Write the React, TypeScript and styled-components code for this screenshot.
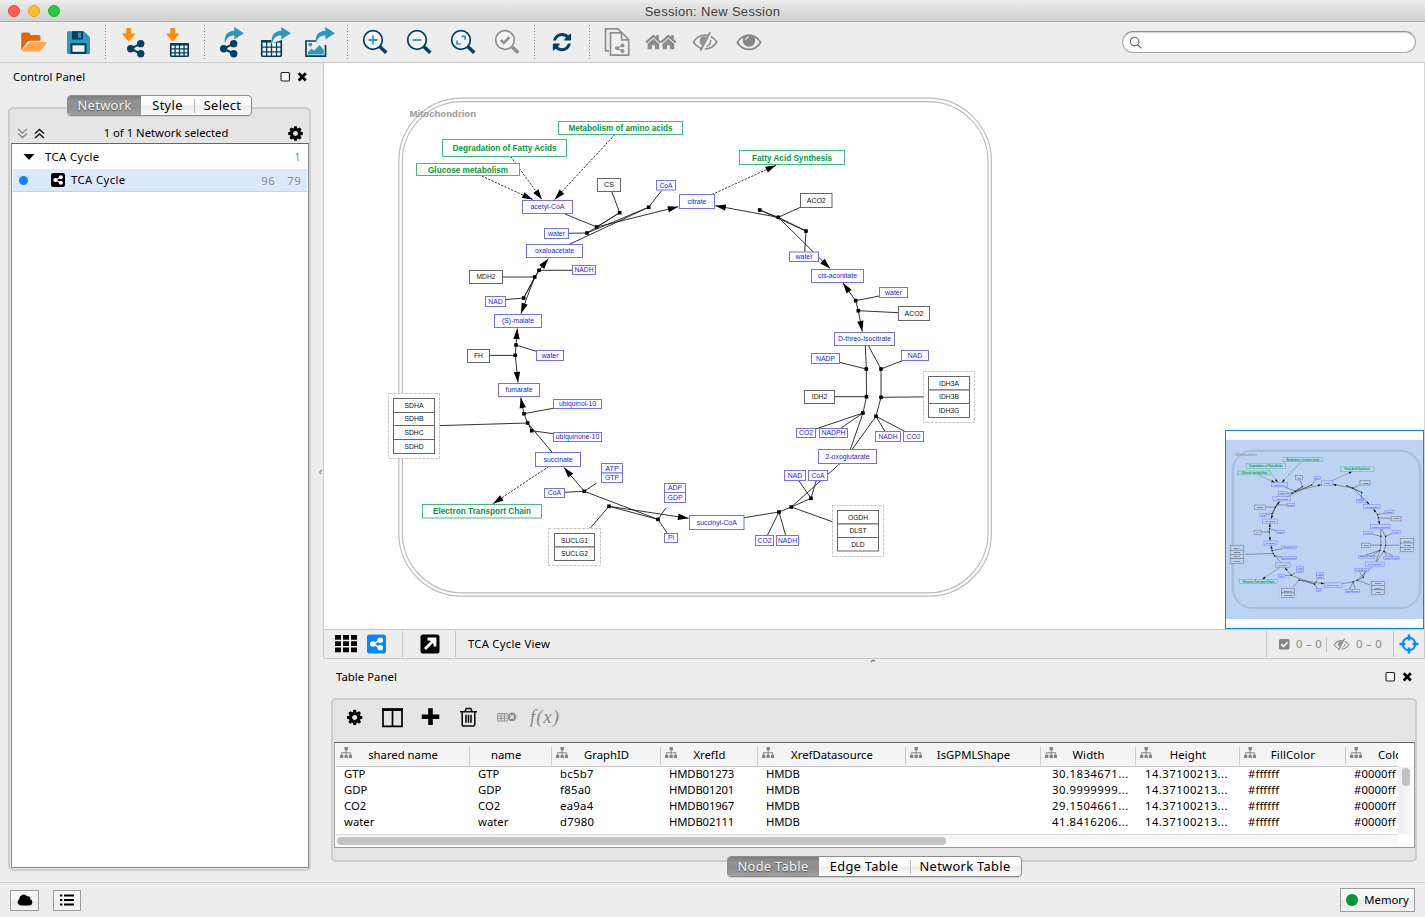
import React from 'react';
import styled, { createGlobalStyle } from 'styled-components';

const NAVY = '#02405f';
const TEAL = '#2f97b8';
const ORANGE = '#ff8a12';
const GREY = '#909090';
const BLUE = '#0a84ff';

const GlobalStyle = createGlobalStyle`
  html, body { margin: 0; padding: 0; }
  body {
    background: #ededed;
    font-family: 'Lucida Grande', 'Noto Sans', sans-serif;
    font-size: 11.3px;
    color: #000;
    overflow: hidden;
  }
  * { box-sizing: border-box; }
  svg { display: block; }
`;

const Window = styled.div`
  width: 1425px;
  height: 917px;
  display: flex;
  flex-direction: column;
  background: #ededed;
`;

const TitleBar = styled.header`
  height: 22px;
  flex: none;
  display: grid;
  grid-template-columns: 1fr auto 1fr;
  align-items: center;
  background: linear-gradient(#efefef, #e6e6e6 20%, #d0d0d0);
  border-bottom: 1px solid #adadad;
  border-radius: 4px 4px 0 0;
`;

const Lights = styled.div`
  display: flex;
  gap: 8px;
  padding-left: 8px;
`;

const Light = styled.i<{ $c: string; $b: string }>`
  width: 12px;
  height: 12px;
  border-radius: 50%;
  background: ${p => p.$c};
  border: 1px solid ${p => p.$b};
`;

const Title = styled.span`
  font: 13px/20px 'Liberation Sans', Arial, sans-serif;
  letter-spacing: 0.32px;
  color: #404040;
  padding-top: 2px;
  white-space: nowrap;
`;

const Toolbar = styled.div`
  height: 41px;
  flex: none;
  display: flex;
  align-items: center;
  padding: 0 9px 0 12px;
  border-bottom: 1px solid #cbcbcb;
`;

const ToolIcon = styled.svg`
  width: 44px;
  height: 40px;
  flex: none;
`;

const ToolSep = styled.div`
  width: 11px;
  height: 34px;
  flex: none;
  background: repeating-linear-gradient(#8d8d8d 0 1px, transparent 1px 3px) 5px 0 / 1px 100% no-repeat;
`;

const Search = styled.div`
  width: 294px;
  height: 22px;
  margin-left: auto;
  border: 1px solid #a9a9a9;
  border-top-color: #8f8f8f;
  border-radius: 11px;
  background: #fff;
  box-shadow: inset 0 1px 1px #d5d5d5;
  padding: 4px 0 0 6px;
`;

const Body = styled.div`
  flex: 1;
  display: flex;
  min-height: 0;
`;

const Side = styled.aside`
  width: 324px;
  flex: none;
  display: flex;
  flex-direction: column;
  padding: 0 13px 12px 8px;
  position: relative;
`;

const SideGrip = styled.div`
  position: absolute;
  right: 1px;
  top: 406px;
`;

const PanelHead = styled.div<{ $h: number; $pl: number; $pr: number; $pb?: number }>`
  height: ${p => p.$h}px;
  flex: none;
  display: flex;
  align-items: center;
  padding: 0 ${p => p.$pr}px ${p => p.$pb ?? 0}px ${p => p.$pl}px;
`;

const Label = styled.span<{ $ls?: number; $c?: string }>`
  letter-spacing: ${p => p.$ls ?? 0}px;
  color: ${p => p.$c ?? '#000'};
  white-space: nowrap;
  line-height: 16px;
`;

const Spacer = styled.div`
  flex: 1;
`;

const Tabs = styled.div<{ $mt: number; $mb: number }>`
  height: 21px;
  flex: none;
  align-self: center;
  display: flex;
  position: relative;
  z-index: 1;
  margin: ${p => p.$mt}px 0 ${p => p.$mb}px;
  border: 1px solid #8c8c8c;
  border-radius: 4px;
  background: linear-gradient(#fff, #fbfbfb 45%, #ececec 55%, #fdfdfd);
  overflow: hidden;
  box-shadow: 0 1px 0 #cfcfcf;
`;

const Tab = styled.div<{ $w: number; $on?: boolean; $sep?: boolean }>`
  width: ${p => p.$w}px;
  font-size: 12.8px;
  letter-spacing: 0.35px;
  line-height: 19px;
  text-align: center;
  white-space: nowrap;
  color: ${p => (p.$on ? '#f4f4f4' : '#000')};
  text-shadow: ${p => (p.$on ? '0 1px 1px #555' : 'none')};
  background: ${p =>
    p.$on
      ? 'linear-gradient(#7d7d7d, #939393 30%, #8e8e8e 60%, #a0a0a0)'
      : p.$sep
        ? 'linear-gradient(#bdbdbd, #bdbdbd) 0 3px / 1px 14px no-repeat'
        : 'none'};
`;

const Group = styled.section<{ $h: number }>`
  height: ${p => p.$h}px;
  flex: none;
  display: flex;
  flex-direction: column;
  border: 2px solid #cdcdcd;
  border-radius: 5px;
  background: #e5e5e5;
  padding: 0 0 1px 1px;
`;

const TreeBar = styled.div`
  height: 34px;
  flex: none;
  display: flex;
  align-items: center;
  justify-content: space-between;
  padding: 14px 5px 0 6px;
`;

const Tree = styled.div`
  flex: 1;
  background: #fff;
  border: 1px solid #8a8a8a;
  border-top-color: #666;
  padding: 1px;
`;

const TreeRow = styled.div<{ $on?: boolean }>`
  height: ${p => (p.$on ? 22 : 23)}px;
  display: flex;
  align-items: center;
  padding: 0 6px;
  margin-bottom: 1px;
  background: ${p => (p.$on ? '#dce9fd' : '#fff')};
  box-shadow: ${p => (p.$on ? '0 1px 0 #cfd3d9' : 'none')};
`;

const TreeLead = styled.div<{ $w: number }>`
  width: ${p => p.$w}px;
  padding-right: 6px;
  flex: none;
  display: flex;
  align-items: center;
  justify-content: space-between;
`;

const Dot = styled.i<{ $s: number; $c: string }>`
  width: ${p => p.$s}px;
  height: ${p => p.$s}px;
  border-radius: 50%;
  background: ${p => p.$c};
`;

const Count = styled.span`
  width: 26px;
  text-align: right;
  color: #8b8b8b;
  letter-spacing: 0.4px;
`;

const Main = styled.main`
  flex: 1;
  min-width: 0;
  display: flex;
  flex-direction: column;
`;

const Canvas = styled.div`
  height: 566px;
  flex: none;
  position: relative;
  background: #fff;
  border-left: 1px solid #cbcbcb;
  margin-left: -1px;
  border-right: 1px solid #d5d5d5;
`;

const BirdsEye = styled.div`
  position: absolute;
  right: 0;
  bottom: 0;
  width: 199px;
  height: 199px;
  border: 1px solid ${BLUE};
  background: #fff;
  display: flex;
  align-items: center;
`;

const Lens = styled.div`
  height: 179px;
  flex: 1;
  background: #bcd3f3;
`;

const ViewBar = styled.div`
  height: 30px;
  flex: none;
  display: flex;
  align-items: center;
  border: 1px solid #c9c9c9;
  margin-left: -1px;
  padding-left: 11px;
`;

const VRule = styled.div<{ $l: number; $r: number; $h?: number }>`
  width: 1px;
  height: ${p => p.$h ?? 26}px;
  margin: 0 ${p => p.$r}px 0 ${p => p.$l}px;
  background: #c6c6c6;
`;

const Handle = styled.div`
  height: 6px;
  flex: none;
  display: flex;
  justify-content: center;
  padding-right: 3px;
`;

const TablePane = styled.div`
  flex: 1;
  display: flex;
  flex-direction: column;
  padding: 0 8px 0 7px;
`;

const TableTools = styled.div`
  height: 42px;
  flex: none;
`;

const Grid = styled.div`
  height: 106px;
  flex: none;
  background: #fff;
  border: 1px solid #9a9a9a;
  border-top-color: #666;
  padding: 0 1px;
  display: flex;
  flex-direction: column;
`;

const COLS = '134px 82px 109px 97px 148px 135px 95px 104px 106px 60px';

const HeadRow = styled.div`
  width: 1062px;
  height: 24px;
  display: grid;
  grid-template-columns: ${COLS};
  overflow: hidden;
  background: #f4f4f4;
  border-bottom: 1px solid #c8c8c8;
`;

const HeadCell = styled.div<{ $last?: boolean; $plain?: boolean }>`
  display: grid;
  grid-template-columns: ${p => (p.$last ? '32px 1fr' : '21px 1fr 21px')};
  align-items: center;
  white-space: nowrap;
  text-align: ${p => (p.$last ? 'left' : 'center')};
  padding-right: ${p => (p.$plain ? 12 : 0)}px;
  background: ${p => (p.$last ? 'none' : 'linear-gradient(#cacaca, #cacaca) right 4px / 1px 18px no-repeat')};
`;

const IconBox = styled.div`
  padding: 0 0 3px 4px;
`;

const BodyArea = styled.div`
  height: 67px;
  display: flex;
`;

const Rows = styled.div`
  width: 1062px;
  overflow: hidden;
`;

const Row = styled.div`
  height: 16px;
  display: grid;
  grid-template-columns: ${COLS};
`;

const Cell = styled.div<{ $pl: number; $ls: number }>`
  padding-left: ${p => p.$pl}px;
  letter-spacing: ${p => p.$ls}px;
  line-height: 14px;
  white-space: nowrap;
`;

const VTrack = styled.div`
  width: 15px;
  padding: 1px 3px;
  background: linear-gradient(90deg, #eee, #fafafa);
`;

const VThumb = styled.div`
  height: 18px;
  width: 8px;
  margin-left: 1px;
  border-radius: 4px;
  background: #c2c2c2;
`;

const HTrack = styled.div`
  width: 1062px;
  flex: 1;
  border-top: 1px solid #dcdcdc;
  padding: 1px;
  background: linear-gradient(#f3f3f3, #fff);
`;

const HThumb = styled.div`
  width: 609px;
  height: 8px;
  margin-top: 1px;
  border-radius: 4px;
  background: #c2c2c2;
`;

const StatusBar = styled.footer`
  height: 35px;
  flex: none;
  display: flex;
  align-items: center;
  gap: 14px;
  padding: 0 10px;
  border-top: 1px solid #cdcdcd;
`;

const StatusButton = styled.div<{ $w: number; $h: number }>`
  width: ${p => p.$w}px;
  height: ${p => p.$h}px;
  display: flex;
  align-items: center;
  justify-content: center;
  gap: 6px;
  border: 1px solid #9b9b9b;
  background: linear-gradient(#fafafa, #f4f4f4 50%, #e9e9e9 52%, #f5f5f5);
`;

/* ---------- icons ---------- */

const Fa = ({ d, s, c }: { d: string; s: number; c: string }) => (
  <svg width={s} height={s} viewBox="0 0 1792 1792" fill={c}><path d={d} /></svg>
);

const EYE = 'M1664 960q-152-236-381-353 61 104 61 225 0 185-131.5 316.5t-316.5 131.5-316.5-131.5-131.5-316.5q0-121 61-225-229 117-381 353 133 205 333.5 326.5t434.5 121.5 434.5-121.5 333.5-326.5zM944 576q0-20-14-34t-34-14q-125 0-214.5 89.5t-89.5 214.5q0 20 14 34t34 14 34-14 14-34q0-86 61-147t147-61q20 0 34-14t14-34zm848 384q0 34-20 69-140 230-376.5 368.5t-499.5 138.5-499.5-139-376.5-368q-20-35-20-69t20-69q140-229 376.5-368t499.5-139 499.5 139 376.500 368q20 35 20 69z';
const REFRESH = 'M1639 1056q0 5-1 7-64 268-268 434.5t-478 166.5q-146 0-282.5-55t-243.5-157l-129 129q-19 19-45 19t-45-19-19-45v-448q0-26 19-45t45-19h448q26 0 45 19t19 45-19 45l-137 137q71 66 161 102t187 36q134 0 250-65t186-179q11-17 53-117 8-23 30-23h192q13 0 22.5 9.5t9.5 22.5zm25-800v448q0 26-19 45t-45 19h-448q-26 0-45-19t-19-45 19-45l138-138q-148-137-349-137-134 0-250 65t-186 179q-11 17-53 117-8 23-30 23h-199q-13 0-22.5-9.5t-9.5-22.5v-7q65-268 270-434.5t480-166.5q146 0 284 55.5t245 156.5l130-129q19-19 45-19t45 19 19 45z';
const COG = 'M1152 896q0-106-75-181t-181-75-181 75-75 181 75 181 181 75 181-75 75-181zm512-109v222q0 12-8 23t-20 13l-185 28q-19 54-39 91 35 50 107 138 10 12 10 25t-9 23q-27 37-99 108t-94 71q-12 0-26-9l-138-108q-44 23-91 38-16 136-29 186-7 28-36 28h-222q-14 0-24.5-8.5t-11.5-21.5l-28-184q-49-16-90-37l-141 107q-10 9-25 9-14 0-25-11-126-114-165-168-7-10-7-23 0-12 8-23 15-21 51-66.5t54-70.5q-27-50-41-99l-183-27q-13-2-21-12.5t-8-23.5v-222q0-12 8-23t19-13l186-28q14-46 39-92-40-57-107-138-10-12-10-24 0-10 9-23 26-36 98.5-107.5t94.5-71.5q13 0 26 10l138 107q44-23 91-38 16-136 29-186 7-28 36-28h222q14 0 24.5 8.5t11.5 21.5l28 184q49 16 90 37l142-107q9-9 24-9 13 0 25 10 129 119 165 170 7 8 7 22 0 12-8 23-15 21-51 66.5t-54 70.5q26 50 41 98l183 28q13 2 21 12.5t8 23.5z';

const Share = ({ x, y, s, c }: { x: number; y: number; s: number; c: string }) => (
  <g transform={`translate(${x} ${y}) scale(${s / 17})`} fill={c} stroke={c}>
    <path d="M13.4 3.6 3.6 8.5l9.8 4.9" fill="none" strokeWidth="2" />
    <circle cx="3.6" cy="8.5" r="3.6" stroke="none" />
    <circle cx="13.4" cy="3.6" r="3.6" stroke="none" />
    <circle cx="13.4" cy="13.4" r="3.6" stroke="none" />
  </g>
);

const TableGlyph = ({ x, y, w, h }: { x: number; y: number; w: number; h: number }) => (
  <g fill="none" stroke={NAVY} strokeWidth="1.5">
    <rect x={x + 0.75} y={y + 0.75} width={w - 1.5} height={h - 1.5} rx="1" fill="#f4f8fa" strokeWidth="1.7" />
    <path d={`M${x} ${y + 1.3}h${w}`} strokeWidth="2.6" />
    <path d={`M${x} ${y + h * 0.42}h${w}M${x} ${y + h * 0.7}h${w}M${x + w * 0.27} ${y}v${h}M${x + w * 0.5} ${y}v${h}M${x + w * 0.74} ${y}v${h}`} strokeWidth="1.3" />
  </g>
);

const DownArrow = ({ x }: { x: number }) => (
  <path d={`M${x - 2.4} 28h4.8v5.4h4.4l-6.8 8.4-6.8-8.4h4.4z`} fill={ORANGE} />
);

const CurveArrow = ({ x }: { x: number }) => (
  <path transform={`translate(${x} 0)`} d="M0 43.5C-1.3 35 2.5 30.9 9.3 30.700V27l9.6 6.2-9.6 6.2v-3.9C4.6 35.4 1.6 37.6 0 43.5z" fill={TEAL} />
);

const Magnifier = ({ x, c }: { x: number; c: string }) => (
  <g fill="none" stroke={c}>
    <circle cx={x - 2} cy="40" r="9.3" strokeWidth="1.7" fill="#f3f5f6" />
    <path d={`M${x + 5} 46.8l6.3 6`} strokeWidth="3.6" />
  </g>
);

const House = ({ x }: { x: number }) => (
  <g fill="#8c8c8c">
    <path d={`M${x} 41.6l8-7 2.800 2.500v-2h2.600v4.300l2.600 2.200-1.400 1.700-6.600-5.800-6.600 5.800z`} />
    <path d={`M${x + 2.2} 43.700l5.800-5 5.800 5v5.500H${x + 9.500}v-3.900h-3v3.900h-4.300z`} />
  </g>
);

const EyeOff = () => (
  <g fill="none" stroke={GREY} strokeWidth="1.7" strokeLinecap="round">
    <path d="M700.5 48.3c-3-1.3-5.4-3.7-7-6.3 2.500-4 6.500-6.800 11.500-6.800.8 0 1.6.1 2.4.2M711.200 36.800c2.300 1.200 4.200 3 5.600 5.200-2.400 3.900-6.300 6.700-11.200 6.900" />
    <path d="M700.7 37.800c-2 3.300-.9 6.500 1.500 8l4.700-8.600c-2.200-1.500-4.700-.9-6.200.6z" fill={GREY} stroke="none" />
    <path d="M709.800 32.800l-9 17.200" strokeWidth="1.900" />
    <path d="M710.700 40.500c0 2.800-1 4.700-3.700 5.600" strokeWidth="1.5" />
  </g>
);

const tools: Record<number, React.ReactNode> = {
  12: (
    <>
      <path d="M21.2 50.4V34.2q0-1.700 1.700-1.700h5.400q1.300 0 1.700 1.300l.4 1.300h8.300q1.800 0 1.800 1.800v3.900h-9.800q-2.300 0-3.700 1.700z" fill="#d96c05" />
      <path d="M31.5 42h14.300q1.300 0 .4 1.400l-5 6.700q-1 1.400-2.500 1.400H23q-1.700 0-.6-1.500l5.300-6.300q1.400-1.700 3.800-1.700z" fill="#ffa64f" />
    </>
  ),
  56: (
    <>
      <path d="M67 32.200q0-1 1-1h16l6 6V53q0 1-1 1H68q-1 0-1-1z" fill={TEAL} />
      <path d="M72 31.200h11v8.300H72z" fill={NAVY} />
      <path d="M78 32.500h3v5.300h-3z" fill={TEAL} />
      <path d="M70.500 43h16v11h-16z" fill={NAVY} />
      <path d="M72.500 45.300h12v6.500h-12z" fill="#f2f2f2" />
    </>
  ),
  111: <><DownArrow x={128.7} /><Share x={127} y={40} s={17.4} c={NAVY} /></>,
  155: <><DownArrow x={172.7} /><TableGlyph x={170} y={43} w={19} h={14} /></>,
  210: <><Share x={220} y={40} s={17.4} c={NAVY} /><CurveArrow x={225} /></>,
  254: <><TableGlyph x={261} y={40} w={21} h={17} /><path d="M271.500 43.500V37h10.500v3z" fill="#ededed" /><CurveArrow x={272} /></>,
  298: (
    <>
      <path d="M325.5 45v11.2H306V41h10" fill="none" stroke={NAVY} strokeWidth="1.7" />
      <circle cx="310.3" cy="44.600" r="1.9" fill={TEAL} />
      <path d="M308 54.500v-2.500l3.500-3.500 2.500 2.200 5.500-5.700 4.200 5v4.500z" fill={TEAL} />
      <CurveArrow x={316} />
    </>
  ),
  353: <><Magnifier x={375} c={NAVY} /><path d="M368.500 40h9M373 35.500v9" stroke={TEAL} strokeWidth="1.8" /></>,
  397: <><Magnifier x={419} c={NAVY} /><path d="M412.500 40h9" stroke={TEAL} strokeWidth="1.8" /></>,
  441: <><Magnifier x={463} c={NAVY} /><path d="M461.500 36.300h3.600v3.500M457 40.500V44h3.600" fill="none" stroke={TEAL} strokeWidth="1.700" /></>,
  485: <><Magnifier x={507} c={GREY} /><path d="M500.800 40l3 3 5.600-5.800" fill="none" stroke={GREY} strokeWidth="2.600" /></>,
  540: <path d={REFRESH} fill={NAVY} transform="translate(551.3 31.4) scale(.0119)" />,
  595: (
    <g fill="none" stroke={GREY} strokeWidth="1.7">
      <path d="M609 50.800h-3.500V28.800h12.500l4 4" />
      <path d="M610.500 32.800h11.500l6.700 6.700v15.600h-18.200z" fill="#f1f1f1" />
      <path d="M621.500 32.800v7h7" />
      <Share x={615} y={43.5} s={9.5} c={GREY} />
    </g>
  ),
  639: <><House x={645.4} /><House x={660.4} /></>,
  683: <EyeOff />,
  727: (
    <>
      <path d={EYE} fill="#868686" transform="translate(736.5 29) scale(.0139)" />
      <circle cx="749" cy="40.500" r="5.600" fill="#868686" />
      <path d="M745.600 40.300q.3-2.900 3.200-3.200" stroke="#e8e8e8" strokeWidth="1.100" fill="none" />
    </>
  ),
};

const Tool = ({ x }: { x: number }) => <ToolIcon viewBox={`${x} 22 44 40`}>{tools[x]}</ToolIcon>;

const PanelButtons = () => (
  <svg width="28" height="12" viewBox="0 0 28 12">
    <rect x="1" y="1.5" width="8.500" height="8.500" rx="1" fill="#f5f5f5" stroke="#222" strokeWidth="1.1" />
    <path d="M18.700 2.200l7.100 7.300M25.800 2.200l-7.100 7.300" stroke="#000" strokeWidth="2.700" />
  </svg>
);

const Sitemap = () => (
  <svg width="12" height="12" viewBox="0 0 12 12">
    <g fill="#858585">
      <path d="M4.5 0h3.400v3.500H4.500zM0 7.700h3.300v3.300H0zM4.500 7.700h3.300v3.300H4.500zM8.900 7.700h3.100v3.300H8.900z" />
      <path d="M5.700 3.500h.9v1.800h4.500v2.400h-.9V6.200H6.600v1.500h-.9V6.200H2.100v1.500h-.9V5.300h4.500z" />
    </g>
  </svg>
);

/* ---------- pathway ---------- */

type Kind = 'm' | 'g' | 'p';
type Node = [number, number, number, number, string, Kind, number];

const COLORS: Record<Kind, [string, string]> = {
  m: ['#6f6fff', '#1a1af0'],
  g: ['#666666', '#111111'],
  p: ['#3dc074', '#009a3d'],
};

// left, top, right, bottom, label, kind, label width
const nodes: Node[] = [
  [558.5, 121.5, 682.5, 134.5, 'Metabolism of amino acids', 'p', 104],
  [442.5, 139.5, 566.5, 156.5, 'Degradation of Fatty Acids', 'p', 104],
  [416.5, 163.5, 519.5, 175.5, 'Glucose metabolism', 'p', 80],
  [739.5, 150.5, 844.5, 164.5, 'Fatty Acid Synthesis', 'p', 80],
  [422.5, 504.5, 541.5, 518, 'Electron Transport Chain', 'p', 98],
  [522.5, 200.5, 572.5, 213.5, 'acetyl-CoA', 'm', 34],
  [656.5, 180.5, 675.5, 190, 'CoA', 'm', 13],
  [544.5, 228.5, 568.5, 238.5, 'water', 'm', 17],
  [526.5, 244.5, 582.5, 257.5, 'oxaloacetate', 'm', 39],
  [572.5, 265.5, 595.5, 274.5, 'NADH', 'm', 19],
  [485.5, 296.5, 505.5, 306.5, 'NAD', 'm', 14.5],
  [494.5, 314.5, 541.5, 327.5, '(S)-malate', 'm', 32],
  [679.5, 194.5, 714.5, 208.5, 'citrate', 'm', 19],
  [789.5, 252, 818.5, 261.5, 'water', 'm', 17],
  [811.5, 269.5, 863.5, 282.5, 'cis-aconitate', 'm', 39],
  [879.5, 287.5, 907.5, 297.5, 'water', 'm', 17],
  [536.5, 350.5, 563.5, 360.5, 'water', 'm', 17],
  [498.5, 383.5, 539.5, 396.5, 'fumarate', 'm', 27],
  [553.5, 399.5, 601.5, 408.5, 'ubiquinol-10', 'm', 37],
  [553.5, 432.5, 601.5, 441.5, 'ubiquinone-10', 'm', 43.5],
  [535.5, 452.5, 580.5, 466.5, 'succinate', 'm', 29],
  [601.5, 463.5, 622.5, 473, 'ATP', 'm', 13.5],
  [601.5, 473, 622.5, 482.5, 'GTP', 'm', 14],
  [544.5, 488.5, 564.5, 497.5, 'CoA', 'm', 13],
  [664.5, 483.5, 685.5, 492.5, 'ADP', 'm', 14],
  [664.5, 492.5, 685.5, 502.5, 'GDP', 'm', 15],
  [664.5, 533.5, 677.5, 542.5, 'Pi', 'm', 6],
  [834.5, 332.5, 894.5, 345.5, 'D-threo-Isocitrate', 'm', 53],
  [811.5, 353.5, 839.5, 363.5, 'NADP', 'm', 19],
  [901.5, 350.5, 928.5, 360.5, 'NAD', 'm', 14.5],
  [796.5, 428.5, 815.5, 437.5, 'CO2', 'm', 14],
  [819.5, 428.5, 847.5, 437.5, 'NADPH', 'm', 24],
  [875.5, 431.5, 900.5, 441.5, 'NADH', 'm', 19],
  [903.5, 431.5, 923.5, 441.5, 'CO2', 'm', 14],
  [818.5, 449.5, 876.5, 463.5, '2-oxoglutarate', 'm', 44],
  [784.5, 470.5, 805.5, 480.5, 'NAD', 'm', 14.5],
  [808.5, 470.5, 827.5, 480.5, 'CoA', 'm', 13],
  [689.5, 515.5, 744, 529.5, 'succinyl-CoA', 'm', 40],
  [755.5, 535.5, 773.5, 545.5, 'CO2', 'm', 14],
  [776.5, 535.5, 798.5, 545.5, 'NADH', 'm', 19],
  [597.5, 178.5, 620.5, 191.5, 'CS', 'g', 10],
  [469.5, 270.5, 502.5, 283.5, 'MDH2', 'g', 19],
  [800.5, 193.5, 832, 207.5, 'ACO2', 'g', 19],
  [898.5, 306.5, 929.5, 320.5, 'ACO2', 'g', 19],
  [467.5, 349.5, 489.5, 362.5, 'FH', 'g', 9],
  [804.5, 390.5, 834.5, 403.5, 'IDH2', 'g', 15.5],
  [393.5, 398.5, 434.5, 412.5, 'SDHA', 'g', 19],
  [393.5, 412.5, 434.5, 425.5, 'SDHB', 'g', 19],
  [393.5, 425.5, 434.5, 439.5, 'SDHC', 'g', 19],
  [393.5, 439.5, 434.5, 453.5, 'SDHD', 'g', 19],
  [554.5, 533.5, 594.5, 547, 'SUCLG1', 'g', 27],
  [554.5, 547, 594.5, 560.5, 'SUCLG2', 'g', 27],
  [928.5, 376.5, 969.5, 390, 'IDH3A', 'g', 20],
  [928.5, 390, 969.5, 403.5, 'IDH3B', 'g', 20],
  [928.5, 403.5, 969.5, 417.5, 'IDH3G', 'g', 20.5],
  [837.5, 510.5, 878.5, 524, 'OGDH', 'g', 20],
  [837.5, 524, 878.5, 537.5, 'DLST', 'g', 17],
  [837.5, 537.5, 878.5, 551, 'DLD', 'g', 13.5],
];

const complexes = [
  [388.5, 393.5, 439.5, 458.5],
  [548.5, 528.5, 600.5, 565.5],
  [923.5, 371.5, 974.5, 422.5],
  [832.5, 505.5, 883.5, 556.5],
];

const anchors = [
  [596.7, 227], [587, 233], [619.7, 212.7], [648.7, 207.2], [539, 270.3], [534.7, 277], [523.7, 298],
  [759.7, 210], [778.3, 217.3], [806, 231], [855.7, 300.7], [858.3, 310.7], [516, 345], [515.3, 355.3],
  [524, 413.7], [527.7, 423], [531.7, 430.7], [584.3, 491.3], [658, 519.4], [609, 506.3],
  [866.3, 369], [866.5, 396.7], [863, 413], [881, 369], [881, 397.3], [876, 416.3],
  [811, 498.3], [791.3, 507], [779, 512],
];

const lines = [
  'M564.3 213.7L596.7 227', 'M596.7 227L619.7 212.7L587 233', 'M611.7 191.5L619.7 212.7',
  'M587 233L648.7 207.2L661.7 190.5', 'M568.5 233.3L587 233', 'M569 244.5L648.7 207.2',
  'M539 270.3L534.7 277L523.7 298', 'M539 270.3L523.7 298', 'M502.5 277H534.7', 'M539 270.3H572', 'M505.7 299.6L523.7 298',
  'M759.7 210L778.3 217.3L806 231', 'M759.7 210L806 231', 'M778.3 217.3L800.3 207.3', 'M806 231L804.7 252',
  'M855.7 300.7L858.3 310.7', 'M855.7 300.7L879.3 296', 'M858.3 310.7L898.3 312.7',
  'M516 345L515.3 355.3', 'M516 345L536.3 351.3', 'M489.5 355.4H515.3',
  'M524 413.7L527.7 423L531.7 430.7', 'M524 413.7L553.3 408.3', 'M439.7 425.6L527.7 423', 'M531.7 430.7L553.3 433.7', 'M527.7 423L552.3 452.5',
  'M584.3 491.3L596.7 483', 'M584.3 491.3L564.5 492.3', 'M584.3 491.3L658 519.4L609 506.3L590.3 528', 'M658 519.4L665.7 508', 'M658 519.4L667.3 533.3',
  'M865.3 345.5L866.3 369L866.5 396.7L863 413L850.3 449.5', 'M868.3 345.5L881 369V397.3L876 416.3L852 449.5', 'M839.3 362.3L866.3 369', 'M902.3 360.7L881 369',
  'M834.5 396.7H866.5', 'M881 397.3L923.5 396.9', 'M863 413L815.7 429', 'M863 413L840.7 428.3', 'M876 416.3L885 431.5', 'M876 416.3L905 431.5',
  'M840 463.5L791.3 507', 'M811 498.3L798.7 480.5', 'M811 498.3L816.3 480.5', 'M811 498.3L791.3 507L779 512L744 517.7', 'M779 512L767.3 535.5', 'M779 512L785.7 535.5', 'M791.3 507L832.3 521.7',
];

// start x, start y, tip x, tip y, dashed
const arrows: [number, number, number, number, boolean?][] = [
  [614.7, 134.7, 554.7, 199.5, true],
  [510.7, 156.5, 542, 199.5, true],
  [481.7, 176, 532.7, 199.5, true],
  [712, 194.5, 776, 165.3, true],
  [548.7, 466.5, 493, 503.7, true],
  [596.7, 227, 678.3, 206.7],
  [539, 270.3, 548.3, 258.7],
  [534.7, 277, 521, 313.5],
  [778.3, 217.3, 715.3, 205.7],
  [778.3, 217.3, 830, 268.5],
  [855.7, 300.7, 843, 283],
  [858.3, 310.7, 862.3, 331.5],
  [516, 345, 517.3, 328.5],
  [515.3, 355.3, 518, 382.5],
  [524, 413.7, 520.7, 397.5],
  [584.3, 491.3, 564, 467.5],
  [609, 506.3, 688.5, 518.3],
];

const Arrow = ({ a }: { a: [number, number, number, number, boolean?] }) => {
  const [x1, y1, x2, y2, dashed] = a;
  const deg = (Math.atan2(y2 - y1, x2 - x1) * 180) / Math.PI;
  return (
    <>
      <path d={`M${x1} ${y1}L${x2} ${y2}`} strokeDasharray={dashed ? '2.2 1.4' : undefined} />
      <path d="M0 0L-10.5 3.2V-3.2z" transform={`translate(${x2} ${y2}) rotate(${deg})`} fill="#000" stroke="none" />
    </>
  );
};

const Pathway = ({ width, height, viewBox, small }: { width: number; height: number; viewBox: string; small?: boolean }) => (
  <svg width={width} height={height} viewBox={viewBox} fontFamily="'Liberation Sans', Arial, sans-serif">
    <g fill="none" stroke={small ? '#a2b3cf' : '#bdbdbd'} strokeWidth={small ? 2.4 : 1.2}>
      <rect x="398.9" y="98.2" width="592.5" height="498" rx="63" />
      <rect x="402.3" y="101.6" width="585.7" height="491.2" rx="60" />
    </g>
    <text x="409.500" y="117" fontSize="9.7" fontWeight="700" fill="#999" textLength="66.5" lengthAdjust="spacingAndGlyphs">Mitochondrion</text>
    {complexes.map(([l, t, r, b]) => (
      <rect key={l} x={l} y={t} width={r - l} height={b - t} fill={small ? 'none' : '#fff'} stroke={small ? '#a2b3cf' : '#c6c6c6'} strokeDasharray="3 1.2" />
    ))}
    <g fill="none" stroke="#1c1c1c" strokeWidth={small ? 1.2 : 0.9}>
      {lines.map(d => <path key={d} d={d} />)}
      {arrows.map((a, i) => <Arrow key={i} a={a} />)}
    </g>
    {anchors.map(([x, y]) => <rect key={`${x}-${y}`} x={x - 1.8} y={y - 1.8} width="3.6" height="3.6" fill="#000" />)}
    {nodes.map(([l, t, r, b, label, kind, w], i) => (
      <g key={i}>
        <rect x={l} y={t} width={r - l} height={b - t} fill={small ? '#bcd3f3' : '#fff'} stroke={COLORS[kind][0]} strokeWidth={small ? 1.4 : 1} />
        <text
          x={(l + r) / 2 - w / 2}
          y={(t + b) / 2 + (kind === 'p' ? 3 : 2.4)}
          fontSize={kind === 'p' ? 8.6 : 7}
          fontWeight={kind === 'p' ? 700 : 400}
          fill={COLORS[kind][1]}
          textLength={w}
          lengthAdjust="spacingAndGlyphs"
        >
          {label}
        </text>
      </g>
    ))}
  </svg>
);

/* ---------- table data ---------- */

const heads = [
  'shared name', 'name', 'GraphID', 'XrefId', 'XrefDatasource',
  'IsGPMLShape', 'Width', 'Height', 'FillColor', 'Color',
];

const H = '14.37100213...';
const rows = [
  ['GTP', 'GTP', 'bc5b7', 'HMDB01273', 'HMDB', '', '30.1834671...', H, '#ffffff', '#0000ff'],
  ['GDP', 'GDP', 'f85a0', 'HMDB01201', 'HMDB', '', '30.9999999...', H, '#ffffff', '#0000ff'],
  ['CO2', 'CO2', 'ea9a4', 'HMDB01967', 'HMDB', '', '29.1504661...', H, '#ffffff', '#0000ff'],
  ['water', 'water', 'd7980', 'HMDB02111', 'HMDB', '', '41.8416206...', H, '#ffffff', '#0000ff'],
];
const pads = [8, 8, 8, 8, 8, 8, 11, 9, 8, 12];
const spacing = [0, 0, 0.3, -0.15, -0.15, 0, 0.5, 0.45, 0.1, 0.1];

export default function App() {
  return (
    <Window>
      <GlobalStyle />
      <TitleBar>
        <Lights>
          <Light $c="#ff5f57" $b="#e2463f" />
          <Light $c="#ffbd2e" $b="#dfa023" />
          <Light $c="#28c940" $b="#1dad2b" />
        </Lights>
        <Title>Session: New Session</Title>
        <span />
      </TitleBar>
      <Toolbar>
        <Tool x={12} /><Tool x={56} /><ToolSep />
        <Tool x={111} /><Tool x={155} /><ToolSep />
        <Tool x={210} /><Tool x={254} /><Tool x={298} /><ToolSep />
        <Tool x={353} /><Tool x={397} /><Tool x={441} /><Tool x={485} /><ToolSep />
        <Tool x={540} /><ToolSep />
        <Tool x={595} /><Tool x={639} /><Tool x={683} /><Tool x={727} />
        <Search>
          <svg width="13" height="13" viewBox="0 0 13 13" fill="none" stroke="#666" strokeWidth="1.1">
            <circle cx="5.6" cy="5.6" r="4.3" /><path d="M8.700 8.700l3.600 3.600" />
          </svg>
        </Search>
      </Toolbar>
      <Body>
        <Side>
          <PanelHead $h={28} $pl={5} $pr={3}>
            <Label $ls={0.05}>Control Panel</Label>
            <Spacer />
            <PanelButtons />
          </PanelHead>
          <Tabs $mt={4} $mb={-9}>
            <Tab $w={73} $on>Network</Tab>
            <Tab $w={53}>Style</Tab>
            <Tab $w={57} $sep>Select</Tab>
          </Tabs>
          <Group $h={764}>
            <TreeBar>
              <svg width="28" height="11" viewBox="0 0 28 11" fill="none" strokeWidth="1.4">
                <path d="M1 1l4.500 4L10 1M1 5.500l4.500 4 4.500-4" stroke="#8a8a8a" />
                <path d="M18 5.500l4.500-4 4.500 4M18 10l4.500-4 4.500 4" stroke="#111" />
              </svg>
              <Label>1 of 1 Network selected</Label>
              <Fa d={COG} s={17} c="#000" />
            </TreeBar>
            <Tree>
              <TreeRow>
                <TreeLead $w={26}>
                  <svg width="18" height="8" viewBox="0 0 18 8"><path d="M4.500 1h11L10 7z" fill="#000" /></svg>
                </TreeLead>
                <Label $ls={0.4}>TCA Cycle</Label>
                <Spacer />
                <Count>1</Count>
              </TreeRow>
              <TreeRow $on>
                <TreeLead $w={52}>
                  <Dot $s={9} $c={BLUE} />
                  <svg width="14" height="14" viewBox="0 0 14 14">
                    <rect width="14" height="14" rx="2.200" />
                    <Share x={2.3} y={2.2} s={9.6} c="#fff" />
                  </svg>
                </TreeLead>
                <Label $ls={0.4}>TCA Cycle</Label>
                <Spacer />
                <Count>96</Count>
                <Count>79</Count>
              </TreeRow>
            </Tree>
          </Group>
          <SideGrip>
            <svg width="4" height="6" viewBox="0 0 4 6"><path d="M3.200 1L1 2.500v1.500l1.500 .8" stroke="#888" strokeWidth="1.200" fill="none" /></svg>
          </SideGrip>
        </Side>
        <Main>
          <Canvas>
            <Pathway width={1100} height={566} viewBox="324 63 1100 566" />
            <BirdsEye>
              <Lens><Pathway width={197} height={179} viewBox="379.2 66 619.5 563" small /></Lens>
            </BirdsEye>
          </Canvas>
          <ViewBar>
            <svg width="52" height="20" viewBox="335 634 52 20">
              <path d="M335 635h6v4.700h-6zM343 635h6v4.700h-6zM351 635h6v4.700h-6zM335 641.300h6v4.700h-6zM343 641.300h6v4.700h-6zM351 641.300h6v4.700h-6zM335 647.600h6v4.700h-6zM343 647.600h6v4.700h-6zM351 647.600h6v4.700h-6z" />
              <rect x="367" y="634.500" width="19" height="19" rx="2.500" fill={BLUE} />
              <Share x={370} y={637.500} s={13} c="#fff" />
            </svg>
            <VRule $l={15} $r={17} />
            <svg width="20" height="20" viewBox="0 0 20 20">
              <rect x=".5" y=".5" width="19" height="19" rx="2.500" />
              <path d="M5 15l8-8M7.500 5h7.500v7.500" stroke="#fff" strokeWidth="2.800" fill="none" />
              <path d="M8 4.500h7.500V12z" fill="#fff" />
            </svg>
            <VRule $l={15} $r={12} />
            <Label $ls={0.25}>TCA Cycle View</Label>
            <Spacer />
            <VRule $l={0} $r={12} />
            <svg width="11" height="11" viewBox="0 0 11 11">
              <rect width="10.500" height="10.500" rx="1.500" fill="#858585" />
              <path d="M2.200 5.300l2.300 2.300 4-4.300" stroke="#fff" strokeWidth="1.600" fill="none" />
            </svg>
            <VRule $l={2} $r={3} $h={0} />
            <Label $c="#8b8b8b" $ls={0.3}>0 – 0</Label>
            <VRule $l={4} $r={6} $h={15} />
            <svg width="17" height="13" viewBox="692.5 31 25.5 21"><EyeOff /></svg>
            <VRule $l={2} $r={3} $h={0} />
            <Label $c="#8b8b8b" $ls={0.3}>0 – 0</Label>
            <VRule $l={11} $r={5} />
            <svg width="20" height="20" viewBox="0 0 20 20" fill="none" stroke={BLUE}>
              <circle cx="10" cy="10" r="6.300" strokeWidth="1.900" />
              <path d="M10 .5v6M10 13.500v6M.5 10h6M13.500 10h6" strokeWidth="2.500" />
            </svg>
            <VRule $l={2} $r={2} $h={0} />
          </ViewBar>
          <Handle>
            <svg width="6" height="4" viewBox="0 0 6 4"><path d="M1 3L2.500 1.500h1.500l.8 1" stroke="#888" strokeWidth="1.300" fill="none" /></svg>
          </Handle>
          <TablePane>
            <PanelHead $h={33} $pl={5} $pr={4} $pb={9}>
              <Label $ls={0.05}>Table Panel</Label>
              <Spacer />
              <PanelButtons />
            </PanelHead>
            <Group $h={164}>
              <TableTools>
                <svg width="240" height="42" viewBox="334 700 240 42">
                  <path d={COG} transform="translate(345.8 708.6) scale(.0099)" />
                  <path d="M383 709h19v17.300h-19zM392.500 709v17" fill="none" stroke="#000" strokeWidth="1.700" />
                  <path d="M382.200 708.500h20.600v2.500h-20.600z" />
                  <path d="M421.800 716.700h17.500M430.500 708.300v16.800" stroke="#000" strokeWidth="4.600" />
                  <g fill="none" stroke="#111" strokeWidth="1.600">
                    <path d="M460 711.700h17M465 711.500l1.300-3h4.400l1.300 3M462.200 712v12.200q0 1.800 1.500 1.800h9.600q1.500 0 1.500-1.800V712M466 714.700v8M468.500 714.700v8M471 714.700v8" />
                  </g>
                  <g fill="none" stroke="#969696">
                    <path d="M497.500 713.500h10v7.500h-10zM497.500 716h10M497.500 718.500h10M501 713v8M504.500 713v8" />
                    <circle cx="512" cy="717" r="4.700" fill="#8c8c8c" stroke="#e5e5e5" strokeWidth=".7" />
                    <path d="M510.300 715.300l3.400 3.400M513.700 715.300l-3.400 3.400" stroke="#eee" strokeWidth="1.300" />
                  </g>
                  <text x="530" y="722.500" fontFamily="'Liberation Serif', serif" fontStyle="italic" fontSize="19" fill="#8a8a8a" textLength="29">f(x)</text>
                </svg>
              </TableTools>
              <Grid>
                <HeadRow>
                  {heads.map((h, i) => (
                    <HeadCell key={h} $plain={i === 1} $last={i === 9}>
                      <span>{i !== 1 && <IconBox><Sitemap /></IconBox>}</span>
                      <Label $ls={i > 5 ? 0.15 : 0}>{h}</Label>
                    </HeadCell>
                  ))}
                </HeadRow>
                <BodyArea>
                  <Rows>
                    {rows.map((r, i) => (
                      <Row key={i}>
                        {r.map((c, j) => <Cell key={j} $pl={j === 9 ? 8 : pads[j]} $ls={spacing[j]}>{c}</Cell>)}
                      </Row>
                    ))}
                  </Rows>
                  <VTrack><VThumb /></VTrack>
                </BodyArea>
                <HTrack><HThumb /></HTrack>
              </Grid>
            </Group>
            <Tabs $mt={-6} $mb={0}>
              <Tab $w={91} $on>Node Table</Tab>
              <Tab $w={91}>Edge Table</Tab>
              <Tab $w={111} $sep>Network Table</Tab>
            </Tabs>
          </TablePane>
        </Main>
      </Body>
      <StatusBar>
        <StatusButton $w={29} $h={21}>
          <svg width="16" height="12" viewBox="0 0 16 12"><path d="M3.500 11.500a3.400 3.400 0 0 1-1.200-6.300A4.300 4.300 0 0 1 10 2.300a2.500 2.500 0 0 1 3.200 3 3.200 3.200 0 0 1-.7 6.200z" /></svg>
        </StatusButton>
        <StatusButton $w={28} $h={21}>
          <svg width="14" height="12" viewBox="0 0 14 12"><path d="M0 .5h2.300v2H0zM0 5h2.300v2H0zM0 9.500h2.300v2H0zM4 .5h10v2H4zM4 5h10v2H4zM4 9.500h10v2H4z" /></svg>
        </StatusButton>
        <Spacer />
        <StatusButton $w={75} $h={24}>
          <Dot $s={12} $c="#009432" />
          <Label>Memory</Label>
        </StatusButton>
      </StatusBar>
    </Window>
  );
}
